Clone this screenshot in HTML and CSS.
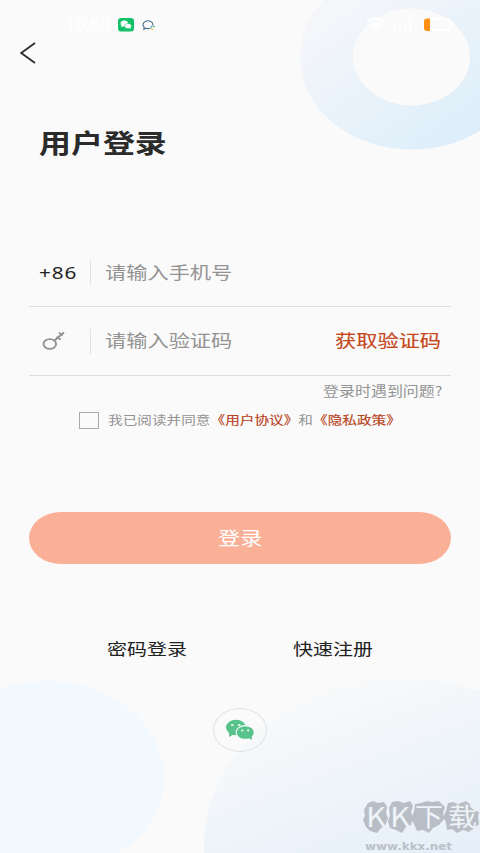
FILE: index.html
```html
<!DOCTYPE html>
<html lang="zh-CN">
<head>
<meta charset="utf-8">
<title>用户登录</title>
<link rel="stylesheet" href="styles.css">
</head>
<body>
<svg class="backdrop" viewBox="0 0 480 853" aria-hidden="true">
  <defs>
    <linearGradient id="ring" gradientUnits="userSpaceOnUse" x1="345" y1="10" x2="450" y2="155">
      <stop offset="0" stop-color="#f4f6fa"/><stop offset="1" stop-color="#dceefa"/>
    </linearGradient>
    <linearGradient id="hill" gradientUnits="userSpaceOnUse" x1="330" y1="690" x2="400" y2="880">
      <stop offset="0" stop-color="#f8f9fa"/><stop offset="1" stop-color="#e5eff9"/>
    </linearGradient>
  </defs>
  <ellipse cx="412" cy="57" rx="112" ry="92.5" fill="url(#ring)"/>
  <ellipse cx="411.5" cy="57" rx="58.5" ry="48.5" fill="#fafafa"/>
  <ellipse cx="47" cy="777" rx="117" ry="96" fill="#f1f8fe"/>
  <ellipse cx="402" cy="845" rx="198" ry="167" fill="url(#hill)"/>
</svg>
<div class="screen">
  <header class="status">
    <span class="time">10:50</span>
    <svg class="chat-badge" viewBox="0 0 16 14"><rect width="16" height="13.5" rx="3" fill="#12c168"/><ellipse cx="6.3" cy="5.5" rx="3.7" ry="3" fill="#fff"/><path d="M3.8 7l-.6 2.2 2.2-1z" fill="#fff"/><ellipse cx="10" cy="8" rx="3.4" ry="2.6" fill="#fff" stroke="#12c168" stroke-width=".5"/><path d="M11 9.8l1.7 1.2-.3-1.8z" fill="#fff"/></svg>
    <svg class="bubble" viewBox="0 0 14 11"><path d="M8.500 8C7 8.800 5.500 8.800 4 8.200L1.800 9.200 2.200 7.200C.2 5.500.8 2.500 3.300 1.400 6.500 0 10.800 1.300 10.800 4.500V5.500" fill="none" stroke="#46708a" stroke-width="1.100"/><path d="M8.700 7.300l1.300-1" stroke="#3a9ae0" stroke-width="1.200"/><path d="M11 5.800l1.600 1.300" stroke="#43a776" stroke-width="1.200"/><path d="M9.300 8.500l1.500 1.300" stroke="#e8b83b" stroke-width="1.200"/></svg>
    <span class="spacer"></span>
    <svg class="system" viewBox="0 0 92 16"><g fill="none" stroke="#fff" stroke-width="2"><path d="M1 5Q10-2 19 5M4 9Q10 4 16 9M7 12Q10 9 13 12"/><path d="M29 14v-4M34 14V7M39 14V4M44 14V1"/><rect x="58" y="2" width="26" height="11" rx="3"/><path d="M87 5v5"/></g><path d="M64 1.500h-3q-3 0-3 3v6.500q0 3 3 3h3z" fill="#ff8f13"/></svg>
  </header>
  <nav class="nav"><svg class="back" viewBox="0 0 16 22"><path d="M15 1L1.200 11 15 21" fill="none" stroke="#2a2a2a" stroke-width="1.700"/></svg></nav>
  <main>
    <h1 class="title"><span class="wide">用户登录</span></h1>
    <section class="fields">
      <div class="field"><span class="lead"><span class="code wide">+86</span></span><span class="hint wide">请输入手机号</span></div>
      <div class="field verify">
        <span class="lead"><svg class="key" viewBox="0 0 24 22"><g fill="none" stroke="#929292"><ellipse cx="7.800" cy="14" rx="6.300" ry="4.900" stroke-width="1.900"/><path d="M12.500 10.500L22 2.500" stroke-width="2"/><path d="M14.300 7l4.500 2.500M16.800 2.800l4 2.300" stroke-width="1.800"/></g></svg></span>
        <span class="hint wide">请输入验证码</span><span class="send"><span class="wide">获取验证码</span></span>
      </div>
    </section>
    <div class="trouble"><span class="wide">登录时遇到问题?</span></div>
    <div class="agree"><span class="box"></span><span class="wide">我已阅读并同意<b>《用户协议》</b>和<b>《隐私政策》</b></span></div>
    <button class="submit"><span class="wide">登录</span></button>
    <div class="links"><span class="wide">密码登录</span><span class="wide">快速注册</span></div>
    <div class="wechat"><svg viewBox="0 0 30 22"><ellipse cx="11" cy="8.500" rx="10" ry="7.800" fill="#57c38a"/><path d="M4 14l.2 4 4-2.500z" fill="#57c38a"/><ellipse cx="20.200" cy="13.500" rx="9.100" ry="6.900" fill="#57c38a" stroke="#fafbfc" stroke-width="1.100"/><path d="M23 18.700l4.200 2-.7-3.500z" fill="#57c38a"/><g fill="#effaf4"><ellipse cx="7.300" cy="6" rx="1.400" ry="1.100"/><ellipse cx="14.200" cy="6" rx="1.400" ry="1.100"/><ellipse cx="17.300" cy="11.500" rx="1.200" ry=".9"/><ellipse cx="23.200" cy="11.500" rx="1.200" ry=".9"/></g></svg></div>
  </main>
</div>
<aside class="mark">
  <svg viewBox="0 0 117 53">
    <g fill="#b9bec6"><path d="M5 3l5-2 5 2 6-1 3 5-1 6 2 5-3 8-4 2-4 5-7-2-4-4-3-7 2-4-1-6z"/><path d="M29 2l6-1 6 2 6-2 3 5-2 6 2 6-2 7-5 2-4 6-6-3-6-2-2-7 2-5-1-8z"/><path d="M52 4l6-1 6-2 5 1 7-1 6 6-2 6 1 6-5 6-6 3-4 5-6-3-6 1-3-7-3-6 3-6z"/><path d="M85 3l5-1 5 2 8-3 5 4 3 5 5 2-1 5 1 7-5 4-5 4-6-2-6 3-5-4-5 1-1-8-3-5 3-6z"/></g>
    <g fill="#eef3f8" font-family="Noto Sans CJK SC, sans-serif"><text x="3" y="26.500" font-size="27" textLength="20" lengthAdjust="spacingAndGlyphs">K</text><text x="27" y="26.500" font-size="27" textLength="20" lengthAdjust="spacingAndGlyphs">K</text><text x="52" y="26" font-size="25" textLength="28" lengthAdjust="spacingAndGlyphs">下</text><text x="85" y="26" font-size="25" textLength="29" lengthAdjust="spacingAndGlyphs">载</text></g>
    <text x="2" y="50" font-family="DejaVu Sans, sans-serif" font-size="11" font-weight="700" fill="#bac0c8" textLength="87" lengthAdjust="spacingAndGlyphs">www.kkx.net</text>
  </svg>
</aside>
</body>
</html>
```
FILE: styles.css
```css
* { box-sizing: border-box; }
body {
  margin: 0;
  width: 480px;
  height: 853px;
  position: relative;
  overflow: hidden;
  background: #fafafa;
  color: #222;
  font-family: "Noto Sans CJK SC", sans-serif;
}
svg { display: block; flex: none; }
.backdrop { position: absolute; inset: 0; width: 480px; height: 853px; }
.screen { position: relative; }
.wide {
  display: inline-block;
  white-space: nowrap;
  transform: scaleX(1.22);
  transform-origin: left center;
}
.status { display: flex; align-items: center; height: 38px; padding: 12px 20px 0 65px; }
.time { width: 53px; color: #fff; font: 18px/20px Roboto, sans-serif; }
.chat-badge { width: 16px; height: 14px; }
.bubble { width: 14px; height: 11px; margin-left: 8px; }
.spacer { flex: 1; }
.system { width: 92px; height: 16px; margin-right: 2px; }
.nav { height: 30px; padding: 4px 20px; }
.back { width: 16px; height: 22px; }
main { padding: 0 29px; }
.title { margin: 54px 0 0 10px; height: 40px; font-size: 26.2px; line-height: 40px; font-weight: 700; color: #2b2b2b; }
.fields { margin-top: 76px; }
.field { display: flex; align-items: center; height: 69px; border-bottom: 1px solid #dcdcdc; }
.verify .hint, .send { padding-bottom: 2px; }
.lead { display: flex; align-items: center; width: 62px; height: 25px; padding-left: 10px; border-right: 1px solid #e2e2e2; margin-right: 14px; }
.code { padding-top: 2px; font: 17px/24px "Noto Sans", sans-serif; letter-spacing: 0.7px; color: #222; }
.hint { font-size: 17.4px; line-height: 24px; color: #939393; }
.key { width: 24px; height: 22px; margin-left: 3px; }
.send { margin-left: auto; width: 116px; font-size: 17.4px; line-height: 24px; color: #c6481c; -webkit-text-stroke: 0.15px #c6481c; }
.trouble { height: 30px; padding-left: 294px; font-size: 13.1px; line-height: 30px; color: #939393; }
.agree { display: flex; align-items: center; height: 28px; padding-left: 50px; font-size: 12px; line-height: 18px; color: #939393; }
.agree b { color: #b9431d; font-weight: 400; -webkit-text-stroke: 0.15px #b9431d; }
.box { width: 20px; height: 17px; border: 1px solid #aaa; margin-right: 9px; }
.submit {
  display: block;
  width: 422px;
  height: 52px;
  margin: 78px 0 0;
  padding: 0 0 2px 189px;
  border: 0;
  border-radius: 32px / 26px;
  background: #fab097;
  color: #fff;
  font: 18.2px/50px "Noto Sans CJK SC", sans-serif;
  text-align: left;
}
.links { display: grid; grid-template-columns: 186px auto; height: 30px; margin: 69px 0 0 78px; font-size: 16.4px; line-height: 30px; }
.links .wide { justify-self: start; }
.wechat { display: flex; align-items: center; justify-content: center; width: 54px; height: 44px; margin: 45px 0 0 184px; border: 1px solid #dfe3e5; border-radius: 50%; }
.wechat svg { width: 30px; height: 22px; }
.mark { position: absolute; left: 363px; top: 800px; width: 117px; height: 53px; }
```
